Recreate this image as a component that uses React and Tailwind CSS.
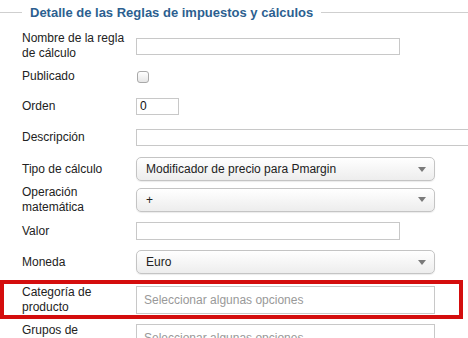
const Arrow = () => (
  <svg width="8" height="5" viewBox="0 0 8 5" className="shrink-0">
    <path d="M0 0 L8 0 L4 5 Z" fill="#7a7a7a" />
  </svg>
)

const Select = ({ value }) => (
  <div className="w-[299px] h-[24px] shrink-0 flex items-center justify-between pl-[9px] pr-[8px] rounded-[5px] border border-[#c4c4c4] bg-gradient-to-b from-white to-[#ededed] shadow-[0_1px_1px_rgba(0,0,0,0.08)]">
    <span className="text-[12px] text-[#222]">{value}</span>
    <Arrow />
  </div>
)

const Row = ({ label, h, children }) => (
  <div className={`flex items-center ${h}`}>
    <label className="w-[114px] shrink-0 text-[12px] leading-[15px] text-[#222]">{label}</label>
    {children}
  </div>
)

const App = () => {
  return (
    <div className="w-[468px] h-[338px] overflow-hidden bg-white font-['Liberation_Sans',Arial,sans-serif]">
      <div className="flex items-center h-[24px] pt-[1px]">
        <div className="w-[22px] border-t border-[#cfcfcf]"></div>
        <h2 className="px-[8px] text-[13px] font-bold text-[#2c5f90] whitespace-nowrap">
          Detalle de las Reglas de impuestos y cálculos
        </h2>
        <div className="flex-1 border-t border-[#cfcfcf]"></div>
      </div>

      <div className="pl-[22px] pt-[7px]">
        <Row label="Nombre de la regla de cálculo" h="h-[30px]">
          <input className="w-[264px] h-[17px] shrink-0 border border-[#c8c8c8] outline-none" />
        </Row>
        <Row label="Publicado" h="h-[31px]">
          <div className="ml-[1px] w-[12px] h-[12px] rounded-[3px] border border-[#a9a9a9] bg-gradient-to-b from-white to-[#e6e6e6]"></div>
        </Row>
        <Row label="Orden" h="h-[28px]">
          <div className="w-[43px] h-[17px] border border-[#c8c8c8] flex items-center pl-[3px] text-[12px] text-[#111]">0</div>
        </Row>
        <Row label="Descripción" h="h-[34px]">
          <div className="w-[340px] h-[17px] shrink-0 border border-[#c8c8c8]"></div>
        </Row>
        <Row label="Tipo de cálculo" h="h-[30px]">
          <Select value="Modificador de precio para Pmargin" />
        </Row>
        <Row label="Operación matemática" h="h-[31px]">
          <Select value="+" />
        </Row>
        <Row label="Valor" h="h-[32px]">
          <div className="w-[264px] h-[18px] shrink-0 border border-[#c8c8c8]"></div>
        </Row>
        <Row label="Moneda" h="h-[30px]">
          <Select value="Euro" />
        </Row>
      </div>

      <div className="mt-[3px] w-[463px] h-[39px] border-4 border-[#d40d0d] pl-[18px] flex items-center">
        <label className="w-[114px] shrink-0 text-[12px] leading-[15px] text-[#222]">Categoría de producto</label>
        <div className="w-[299px] h-[28px] shrink-0 border border-[#c8c8c8] flex items-center pl-[7px] text-[12px] text-[#999]">
          Seleccionar algunas opciones
        </div>
      </div>

      <div className="pl-[22px]">
        <Row label="Grupos de compradores" h="h-[38px]">
          <div className="w-[299px] h-[28px] shrink-0 border border-[#c8c8c8] flex items-center pl-[7px] text-[12px] text-[#999]">
            Seleccionar algunas opciones
          </div>
        </Row>
      </div>
    </div>
  )
}

export default App
